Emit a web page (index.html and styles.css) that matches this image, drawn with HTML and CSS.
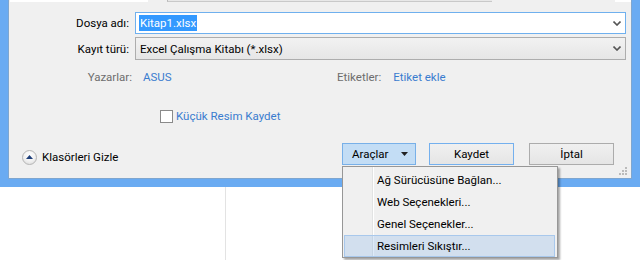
FILE: index.html
```html
<!DOCTYPE html>
<html lang="tr">
<head>
<meta charset="utf-8">
<title>Farklı Kaydet</title>
<link rel="stylesheet" href="styles.css">
</head>
<body>
<div class="screen">
  <div class="dialog">
    <div class="panel">
      <div class="cut">
        <span class="cut-white"></span>
        <span class="cut-tab"></span>
        <span class="cut-end"></span>
      </div>
      <div class="fields">
        <div class="lbl">Dosya adı:</div>
        <div class="input">
          <span class="sel">Kitap1.xlsx</span>
          <svg class="chev" width="8" height="5" viewBox="0 0 8 5"><path d="M0.5 0.5 L4 4 L7.5 0.5" fill="none" stroke="#555" stroke-width="1.6"/></svg>
        </div>
        <div class="lbl">Kayıt türü:</div>
        <div class="combo">
          <span>Excel Çalışma Kitabı (*.xlsx)</span>
          <svg class="chev" width="8" height="5" viewBox="0 0 8 5"><path d="M0.5 0.5 L4 4 L7.5 0.5" fill="none" stroke="#555" stroke-width="1.6"/></svg>
        </div>
      </div>
      <div class="meta">
        <span class="mlbl mlbl-first">Yazarlar:</span>
        <span class="link author">ASUS</span>
        <span class="mlbl">Etiketler:</span>
        <span class="link tags">Etiket ekle</span>
      </div>
      <div class="thumb">
        <span class="box"></span>
        <span class="link">Küçük Resim Kaydet</span>
      </div>
      <div class="footer">
        <div class="toggle">
          <span class="circ"><svg width="7" height="4" viewBox="0 0 7 4"><path d="M0 4 L3.5 0 L7 4 Z" fill="#1f3f7a"/></svg></span>
          <span>Klasörleri Gizle</span>
        </div>
        <div class="btn tools"><span>Araçlar</span><svg width="7" height="4" viewBox="0 0 7 4"><path d="M0 0 L7 0 L3.5 4 Z" fill="#222"/></svg></div>
        <div class="btn default">Kaydet</div>
        <div class="btn cancel">İptal</div>
      </div>
      <svg class="grip" width="8" height="8" viewBox="0 0 8 8">
        <rect x="6" y="0" width="2" height="2" fill="#bbb"/>
        <rect x="3" y="3" width="2" height="2" fill="#bbb"/>
        <rect x="6" y="3" width="2" height="2" fill="#bbb"/>
        <rect x="0" y="6" width="2" height="2" fill="#bbb"/>
        <rect x="3" y="6" width="2" height="2" fill="#bbb"/>
        <rect x="6" y="6" width="2" height="2" fill="#bbb"/>
      </svg>
    </div>
  </div>
  <div class="behind">
    <div class="pane-left"></div>
    <div class="pane-right"></div>
  </div>
  <div class="menu">
    <div class="item">Ağ Sürücüsüne Bağlan...</div>
    <div class="item">Web Seçenekleri...</div>
    <div class="item">Genel Seçenekler...</div>
    <div class="item hot">Resimleri Sıkıştır...</div>
  </div>
</div>
</body>
</html>
```

FILE: styles.css
```css
* { box-sizing: border-box; }
html, body { margin: 0; padding: 0; background: #fff; }
body {
  font-family: Roboto, "Noto Sans", sans-serif;
  font-size: 11.5px;
  color: #000;
}
.screen {
  position: relative;
  width: 640px;
  height: 260px;
  overflow: hidden;
  background: #fff;
}
.dialog {
  height: 187px;
  border-left: 8px solid #6aabf2;
  border-right: 8px solid #6aabf2;
  border-bottom: 8px solid #6aabf2;
}
.panel {
  position: relative;
  height: 179px;
  background: #f0f0f0;
  border-left: 1px solid #7fa6cf;
  border-right: 1px solid #7fa6cf;
  border-bottom: 1px solid #7fa6cf;
}
.cut {
  display: flex;
  height: 2px;
}
.cut-white { width: 138px; margin-left: 1px; background: #fff; }
.cut-tab {
  width: 325px;
  margin-left: 19px;
  background: #e8e8e8;
  border-left: 1px solid #b9b9b9;
  border-bottom: 1px solid #c9c9c9;
}
.cut-end { width: 16px; margin-left: auto; background: #fff; }

.fields {
  display: grid;
  grid-template-columns: 120px 491px;
  column-gap: 6px;
  row-gap: 3px;
  margin-top: 10px;
}
.lbl {
  text-align: right;
  align-self: center;
  line-height: 16px;
}
.input, .combo {
  display: flex;
  align-items: center;
  justify-content: space-between;
  padding: 0 4px 0 3px;
}
.input {
  height: 22px;
  background: #fff;
  border: 1px solid #6fb0ee;
}
.sel {
  background: #3399ff;
  color: #fff;
  line-height: 16px;
  padding: 0 1px;
}
.combo {
  height: 23px;
  border: 1px solid #adadad;
  background: linear-gradient(#f2f2f2, #e6e6e6);
}
.combo span { padding-left: 1px; }
.chev { display: block; }

.meta {
  display: flex;
  margin-top: 8px;
  height: 18px;
  line-height: 18px;
}
.mlbl { color: #6d6d6d; }
.mlbl-first { width: 123px; text-align: right; }
.link { color: #3a7ccf; }
.author { margin-left: 11px; width: 194px; }
.tags { margin-left: 12px; }

.thumb {
  display: flex;
  align-items: center;
  margin-top: 21px;
  padding-left: 151px;
  height: 18px;
}
.box {
  width: 13px;
  height: 13px;
  border: 1px solid #8a8a8a;
  background: #fff;
  margin-right: 3px;
}

.footer {
  display: flex;
  align-items: flex-start;
  margin-top: 18px;
  padding: 0 17px 0 13px;
}
.toggle {
  display: flex;
  align-items: center;
  height: 18px;
  margin-top: 5px;
  line-height: 18px;
}
.circ {
  width: 15px;
  height: 15px;
  border-radius: 50%;
  border: 1px solid #b5b5b5;
  background: radial-gradient(circle at 50% 35%, #ffffff 0%, #f2f2f2 50%, #d6d6d6 100%);
  display: flex;
  align-items: center;
  justify-content: center;
  margin-right: 5px;
}
.circ svg { display: block; margin-top: -1px; }
.btn {
  height: 22px;
  line-height: 20px;
  width: 85px;
  text-align: center;
  border: 1px solid #acacac;
  background: linear-gradient(#f0f0f0, #e5e5e5);
}
.tools {
  width: 74px;
  margin-left: auto;
  display: flex;
  align-items: center;
  justify-content: space-between;
  padding: 0 7px 0 9px;
  background: #c3ddf5;
  border-color: #78b0e8;
}
.tools svg { display: block; }
.default {
  margin-left: 13px;
  border-color: #74b0ee;
}
.cancel { margin-left: 15px; }
.grip {
  position: absolute;
  right: 4px;
  bottom: 3px;
}

.behind {
  display: flex;
  height: 73px;
}
.pane-left { width: 226px; border-right: 1px solid #e3e3e3; }
.pane-right { flex: 1; }

.menu {
  position: absolute;
  left: 342px;
  top: 166px;
  width: 216px;
  height: 92px;
  padding: 2px 2px 2px 1px;
  border: 1px solid #979797;
  background:
    linear-gradient(to right, transparent 29px, #e2e3e3 29px, #e2e3e3 30px, #ffffff 30px, #ffffff 31px, transparent 31px),
    #f0f0f0;
  box-shadow: 2px 2px 2px rgba(0, 0, 0, 0.35);
}
.item {
  height: 22px;
  line-height: 20px;
  padding-left: 32px;
  border: 1px solid transparent;
}
.item.hot {
  background: rgba(120, 170, 230, 0.25);
  border-color: #a8c8ec;
}
```
